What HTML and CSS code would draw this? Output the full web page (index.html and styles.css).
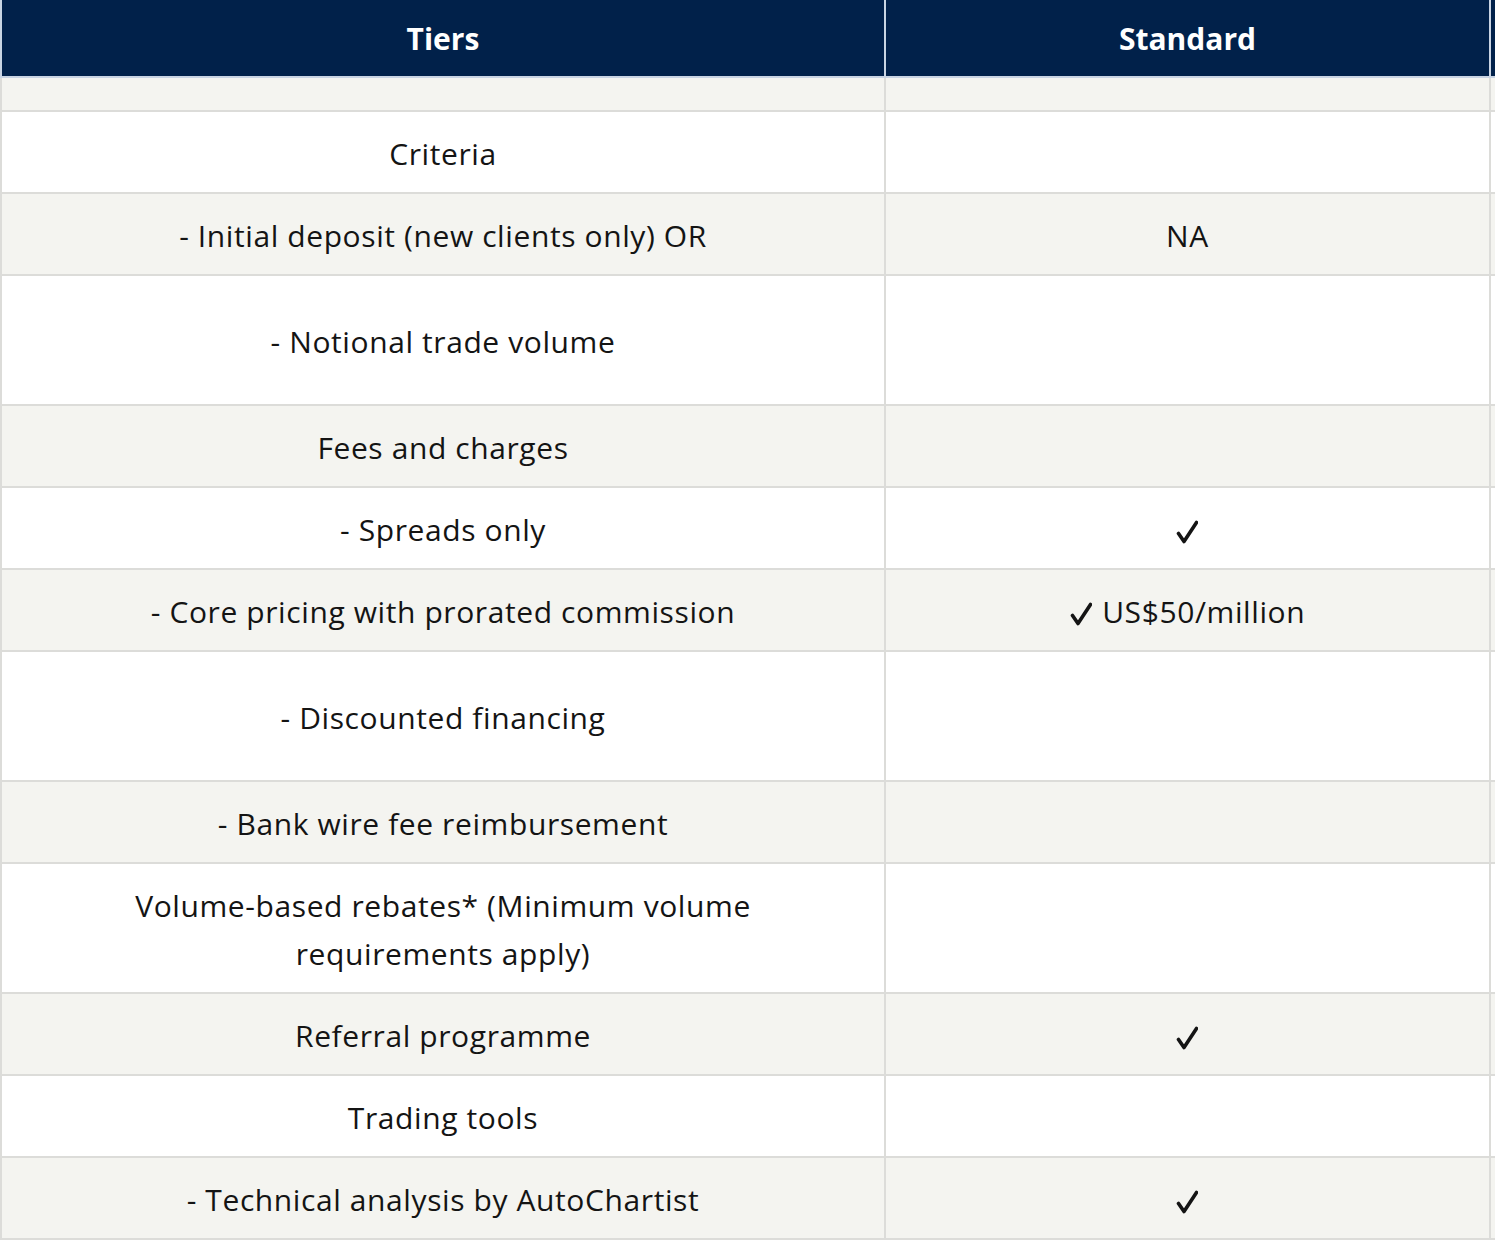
FILE: index.html
```html
<!DOCTYPE html>
<html>
<head>
<meta charset="utf-8">
<link rel="stylesheet" href="styles.css">
</head>
<body>
<div class="wrap">
<table class="tiers">
  <colgroup>
    <col class="c1"><col class="c2"><col class="c3">
  </colgroup>
  <thead>
    <tr><th>Tiers</th><th>Standard</th><th></th></tr>
  </thead>
  <tbody>
    <tr class="alt empty"><td></td><td></td><td></td></tr>
    <tr><td>Criteria</td><td></td><td></td></tr>
    <tr class="alt"><td>- Initial deposit (new clients only) OR</td><td>NA</td><td></td></tr>
    <tr class="tall"><td>- Notional trade volume</td><td></td><td></td></tr>
    <tr class="alt"><td>Fees and charges</td><td></td><td></td></tr>
    <tr><td>- Spreads only</td><td><svg class="chk" viewBox="0 0 22 24" width="22" height="24" aria-label="✓"><path d="M2.5 13.5 L8 21.5 L20.5 2.5" fill="none" stroke="#141414" stroke-width="3.6" stroke-linecap="round" stroke-linejoin="round"/></svg></td><td></td></tr>
    <tr class="alt"><td>- Core pricing with prorated commission</td><td><svg class="chk" viewBox="0 0 22 24" width="22" height="24" aria-label="✓"><path d="M2.5 13.5 L8 21.5 L20.5 2.5" fill="none" stroke="#141414" stroke-width="3.6" stroke-linecap="round" stroke-linejoin="round"/></svg> US$50/million</td><td></td></tr>
    <tr class="tall"><td>- Discounted financing</td><td></td><td></td></tr>
    <tr class="alt"><td>- Bank wire fee reimbursement</td><td></td><td></td></tr>
    <tr><td>Volume-based rebates* (Minimum volume requirements apply)</td><td></td><td></td></tr>
    <tr class="alt"><td>Referral programme</td><td><svg class="chk" viewBox="0 0 22 24" width="22" height="24" aria-label="✓"><path d="M2.5 13.5 L8 21.5 L20.5 2.5" fill="none" stroke="#141414" stroke-width="3.6" stroke-linecap="round" stroke-linejoin="round"/></svg></td><td></td></tr>
    <tr><td>Trading tools</td><td></td><td></td></tr>
    <tr class="alt"><td>- Technical analysis by AutoChartist</td><td><svg class="chk" viewBox="0 0 22 24" width="22" height="24" aria-label="✓"><path d="M2.5 13.5 L8 21.5 L20.5 2.5" fill="none" stroke="#141414" stroke-width="3.6" stroke-linecap="round" stroke-linejoin="round"/></svg></td><td></td></tr>
  </tbody>
</table>
</div>
</body>
</html>
```

FILE: styles.css
```css
html, body {
  margin: 0;
  padding: 0;
  background: #ffffff;
  overflow: hidden;
}
.wrap {
  width: 2200px;
}
.tiers {
  border-collapse: collapse;
  table-layout: fixed;
  width: 2090px;
  font-family: "Open Sans", "Noto Sans", sans-serif;
  font-size: 30px;
  letter-spacing: 0.6px;
  line-height: 48px;
  color: #141414;
}
.c1 { width: 884px; }
.c2 { width: 605px; }
.c3 { width: 601px; }
.tiers th, .tiers td {
  border: 2px solid #dcdcd9;
  text-align: center;
  vertical-align: middle;
}
.tiers th {
  background: #01214a;
  color: #ffffff;
  font-weight: 700;
  font-size: 30px;
  letter-spacing: 0;
  line-height: 44px;
  padding: 17px 20px 15px;
  border-color: #c9d4e3;
  border-top: 0;
}
.tiers td {
  padding: 18px 110px 14px;
}
.tiers tr.alt td {
  background: #f4f4f0;
}
.tiers tr.empty td {
  height: 0;
  padding: 16px 0;
  line-height: 0;
}
.tiers tr.tall td {
  height: 96px;
}
.chk {
  display: inline-block;
  vertical-align: -3px;
  margin-right: 2px;
}
```
